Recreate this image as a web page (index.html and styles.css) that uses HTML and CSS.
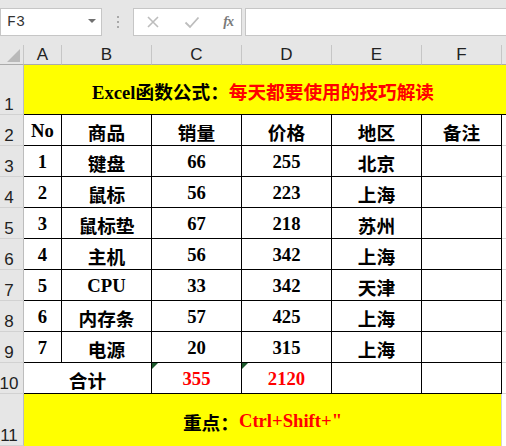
FILE: index.html
```html
<!DOCTYPE html>
<html lang="zh-CN">
<head>
<meta charset="utf-8">
<title>Excel</title>
<link rel="stylesheet" href="styles.css">
</head>
<body>
<div class="app">
  <div class="fbar">
    <div class="namebox"><span class="ref">F3</span><span class="caret"></span></div>
    <div class="grip"><i></i><i></i><i></i></div>
    <div class="btns">
      <svg class="ico" width="14" height="14" viewBox="0 0 14 14"><path d="M2 2L12 12M12 2L2 12" stroke="#bdbdbd" stroke-width="1.6" fill="none"/></svg>
      <svg class="ico" width="16" height="14" viewBox="0 0 16 14"><path d="M1.5 7.5L6 12L14.5 2.5" stroke="#bdbdbd" stroke-width="1.8" fill="none"/></svg>
      <span class="fx">fx</span>
    </div>
    <div class="finput"></div>
  </div>

  <div class="sheet">
    <div class="corner"><span class="tri"></span></div>
    <div class="ch">A</div><div class="ch">B</div><div class="ch">C</div><div class="ch">D</div><div class="ch">E</div><div class="ch">F</div><div class="ch last"></div>

    <div class="rh">1</div>
    <div class="title"><span>Excel函数公式：</span><span class="red">每天都要使用的技巧解读</span></div>

    <div class="rh">2</div>
    <div class="c">No</div><div class="c">商品</div><div class="c">销量</div><div class="c">价格</div><div class="c">地区</div><div class="c">备注</div><div class="g"></div>

    <div class="rh">3</div>
    <div class="c">1</div><div class="c">键盘</div><div class="c">66</div><div class="c">255</div><div class="c">北京</div><div class="c"></div><div class="g"></div>

    <div class="rh">4</div>
    <div class="c">2</div><div class="c">鼠标</div><div class="c">56</div><div class="c">223</div><div class="c">上海</div><div class="c"></div><div class="g"></div>

    <div class="rh">5</div>
    <div class="c">3</div><div class="c">鼠标垫</div><div class="c">67</div><div class="c">218</div><div class="c">苏州</div><div class="c"></div><div class="g"></div>

    <div class="rh">6</div>
    <div class="c">4</div><div class="c">主机</div><div class="c">56</div><div class="c">342</div><div class="c">上海</div><div class="c"></div><div class="g"></div>

    <div class="rh">7</div>
    <div class="c">5</div><div class="c">CPU</div><div class="c">33</div><div class="c">342</div><div class="c">天津</div><div class="c"></div><div class="g"></div>

    <div class="rh">8</div>
    <div class="c">6</div><div class="c">内存条</div><div class="c">57</div><div class="c">425</div><div class="c">上海</div><div class="c"></div><div class="g"></div>

    <div class="rh">9</div>
    <div class="c">7</div><div class="c">电源</div><div class="c">20</div><div class="c">315</div><div class="c">上海</div><div class="c"></div><div class="g"></div>

    <div class="rh">10</div>
    <div class="c span2">合计</div><div class="c red flag">355</div><div class="c red flag">2120</div><div class="c"></div><div class="c"></div><div class="g"></div>

    <div class="rh">11</div>
    <div class="note"><span>重点：</span><span class="red">Ctrl+Shift+"</span></div><div class="g plain"></div>
  </div>
</div>
</body>
</html>
```

FILE: styles.css
```css
* { box-sizing: border-box; }
html, body { margin: 0; padding: 0; }
body { width: 506px; height: 446px; overflow: hidden; background: #e6e6e6; }

.app { width: 506px; height: 446px; display: flex; flex-direction: column; }

/* formula bar */
.fbar {
  height: 45px;
  display: flex;
  align-items: flex-start;
  padding-top: 8px;
  background: #e6e6e6;
}
.namebox {
  width: 102px;
  height: 28px;
  background: #fff;
  border: 1px solid #c6c6c6;
  display: flex;
  align-items: center;
  justify-content: space-between;
  padding: 0 5px 0 6px;
}
.ref { font-family: "Liberation Mono", monospace; font-size: 15px; color: #333; }
.caret {
  width: 0; height: 0;
  border-left: 4px solid transparent;
  border-right: 4px solid transparent;
  border-top: 4px solid #707070;
  margin-top: -2px;
}
.grip {
  width: 31px;
  height: 28px;
  display: flex;
  flex-direction: column;
  align-items: center;
  justify-content: center;
  gap: 3px;
}
.grip i { display: block; width: 2px; height: 2px; background: #a8a8a8; }
.btns {
  width: 109px;
  height: 28px;
  background: #fff;
  border: 1px solid #c6c6c6;
  display: flex;
  align-items: center;
  padding: 0 8px 0 12px;
  justify-content: space-between;
}
.fx {
  font-family: "Liberation Serif", serif;
  font-style: italic;
  font-weight: bold;
  font-size: 14px;
  color: #7a7a7a;
  letter-spacing: -1px;
}
.finput {
  flex: 1;
  margin-left: 3px;
  height: 28px;
  background: #fff;
  border: 1px solid #c6c6c6;
  border-right: none;
}

/* sheet grid */
.sheet {
  display: grid;
  grid-template-columns: 24px 38px 90px 90px 90px 90px 80px 1fr;
  grid-template-rows: 20px 50px repeat(9, 31px) 52px;
  background: #fff;
  font-family: "Liberation Serif", "Noto Sans CJK SC", serif;
  font-weight: bold;
  font-size: 18.67px;
  color: #000;
}

.corner {
  background: #e6e6e6;
  border-right: 1px solid #c6c6c6;
  border-bottom: 1px solid #ababab;
  display: flex;
  align-items: flex-end;
  justify-content: flex-end;
  padding: 0 3px 2px 0;
}
.tri {
  width: 13px;
  height: 13px;
  background: #b9b9b9;
  clip-path: polygon(100% 0, 100% 100%, 0 100%);
}

.ch {
  background: #e6e6e6;
  border-right: 1px solid #c6c6c6;
  border-bottom: 1px solid #ababab;
  font-family: "Liberation Sans Narrow", "Liberation Sans", sans-serif;
  font-weight: normal;
  font-size: 17px;
  color: #222;
  display: flex;
  align-items: flex-end;
  justify-content: center;
  line-height: 1;
  padding-bottom: 1px;
}
.ch.last { border-right: none; }

.rh {
  background: #e6e6e6;
  border-right: 1px solid #bdbdbd;
  border-bottom: 1px solid #d2d2d2;
  font-family: "Liberation Sans Narrow", "Liberation Sans", sans-serif;
  font-weight: normal;
  font-size: 17px;
  color: #222;
  display: flex;
  align-items: flex-end;
  justify-content: center;
  padding: 0 5px 1px 0;
  line-height: 1;
}

.title {
  grid-column: 2 / 9;
  background: #ffff00;
  border-bottom: 1px solid #000;
  display: flex;
  align-items: center;
  justify-content: center;
  padding-right: 4px;
  padding-top: 2px;
}

.c {
  border-right: 1px solid #000;
  border-bottom: 1px solid #000;
  display: flex;
  align-items: center;
  justify-content: center;
  padding-top: 2px;
  white-space: nowrap;
}
.span2 { grid-column: span 2; }
.red { color: #ff0000; }
.flag { position: relative; }
.flag::before {
  content: "";
  position: absolute;
  left: 0;
  top: 0;
  width: 6px;
  height: 6px;
  background: #1d5a2c;
  clip-path: polygon(0 0, 100% 0, 0 100%);
}

.g { border-bottom: 1px solid #d4d4d4; }
.g.plain { border-bottom: none; }

.note {
  grid-column: 2 / 8;
  background: #ffff00;
  border-right: 1px solid #d4d4d4;
  display: flex;
  align-items: center;
  justify-content: center;
  padding-top: 2px;
}
```
